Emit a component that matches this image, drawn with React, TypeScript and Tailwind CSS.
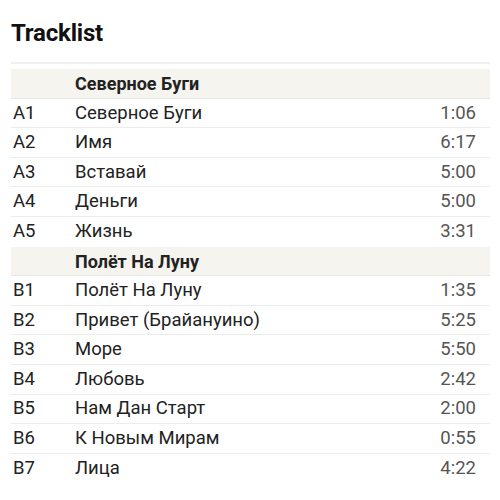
const SIDES = [
  {
    title: 'Северное Буги',
    tracks: [
      ['A1', 'Северное Буги', '1:06'],
      ['A2', 'Имя', '6:17'],
      ['A3', 'Вставай', '5:00'],
      ['A4', 'Деньги', '5:00'],
      ['A5', 'Жизнь', '3:31'],
    ],
  },
  {
    title: 'Полёт На Луну',
    tracks: [
      ['B1', 'Полёт На Луну', '1:35'],
      ['B2', 'Привет (Брайануино)', '5:25'],
      ['B3', 'Море', '5:50'],
      ['B4', 'Любовь', '2:42'],
      ['B5', 'Нам Дан Старт', '2:00'],
      ['B6', 'К Новым Мирам', '0:55'],
      ['B7', 'Лица', '4:22'],
    ],
  },
];

export default function App() {
  return (
    <div className="h-[500px] w-[500px] bg-white px-[11px] pt-[17px] font-['Roboto',sans-serif] text-[#222]">
      <h2 className="text-[24px] font-bold leading-[32px] tracking-[-0.2px] text-[#111]">Tracklist</h2>
      <div className="mt-[13px] w-[479px] border-t-2 border-[#f0f0ee] pt-[5px]">
        {SIDES.map((side) => (
          <div key={side.title}>
            <div className="box-border flex h-[29.6px] items-center border-b border-[#e8e8e3] bg-[#f5f4ee] pl-[64px] pt-[1px] text-[18px] font-bold">
              {side.title}
            </div>
            {side.tracks.map(([pos, name, dur]) => (
              <div
                key={pos}
                className="box-border flex h-[29.6px] items-center border-b border-[#ececec] pt-[1px] text-[18.5px] last:border-b-0"
              >
                <span className="w-[64px] pl-[2px]">{pos}</span>
                <span className="flex-1">{name}</span>
                <span className="pr-[14px] text-[#555]">{dur}</span>
              </div>
            ))}
          </div>
        ))}
      </div>
    </div>
  );
}
